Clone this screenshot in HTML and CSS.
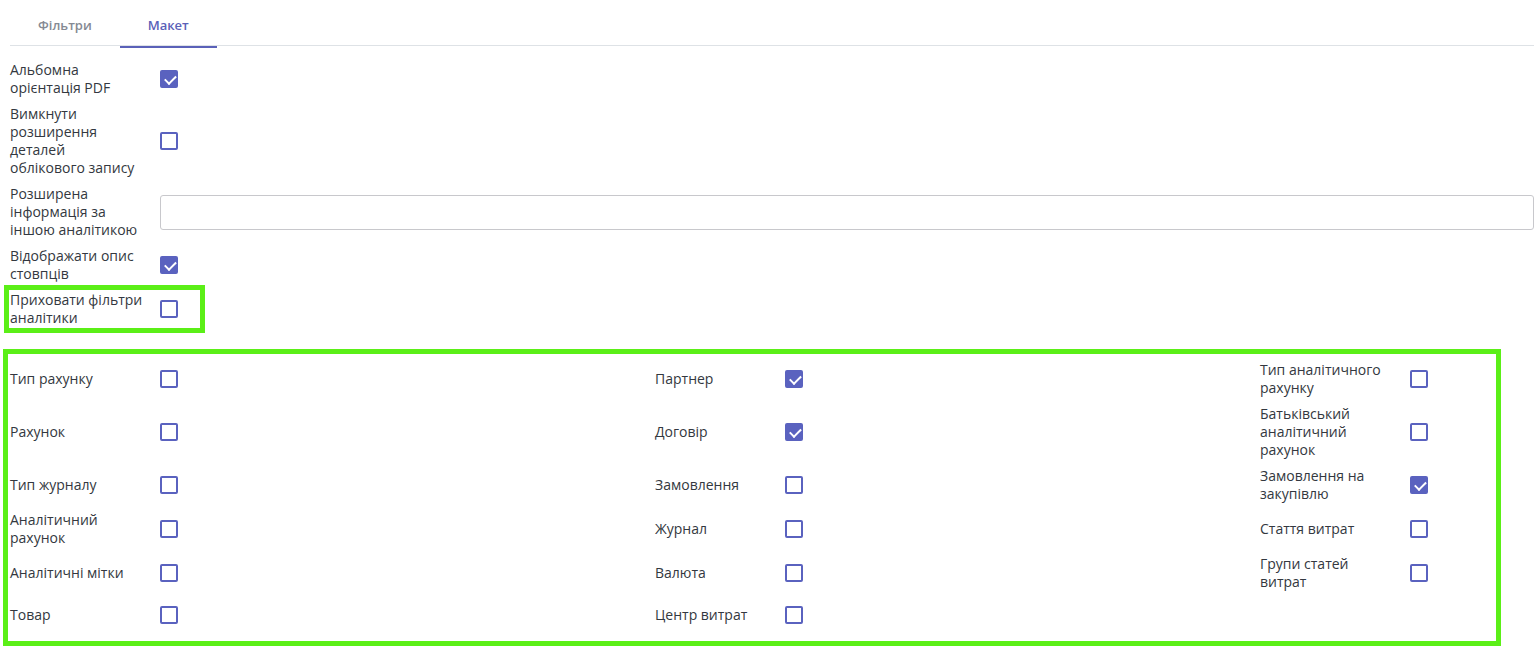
FILE: index.html
```html
<!DOCTYPE html>
<html lang="uk">
<head>
  <meta charset="UTF-8">
  <title>Макет звіту</title>
  <link rel="stylesheet" href="styles.css">
</head>
<body>
  <div class="page">
    <nav class="tabs">
      <a class="tab">Фільтри</a>
      <a class="tab active">Макет</a>
    </nav>

    <div class="form-list">
      <div class="row">
        <label class="lbl">Альбомна орієнтація PDF</label>
        <div class="fld"><input type="checkbox" class="chk" checked></div>
      </div>
      <div class="row">
        <label class="lbl">Вимкнути розширення деталей облікового запису</label>
        <div class="fld"><input type="checkbox" class="chk"></div>
      </div>
      <div class="row">
        <label class="lbl">Розширена інформація за іншою аналітикою</label>
        <div class="fld"><input type="text" class="txt"></div>
      </div>
      <div class="row">
        <label class="lbl">Відображати опис стовпців</label>
        <div class="fld"><input type="checkbox" class="chk" checked></div>
      </div>
      <div class="row marked">
        <label class="lbl">Приховати фільтри аналітики</label>
        <div class="fld"><input type="checkbox" class="chk"></div>
      </div>
    </div>

    <div class="analytic-box">
      <label class="lbl">Тип рахунку</label>
      <div class="fld"><input type="checkbox" class="chk"></div>
      <label class="lbl">Партнер</label>
      <div class="fld"><input type="checkbox" class="chk" checked></div>
      <label class="lbl">Тип аналітичного рахунку</label>
      <div class="fld"><input type="checkbox" class="chk"></div>

      <label class="lbl">Рахунок</label>
      <div class="fld"><input type="checkbox" class="chk"></div>
      <label class="lbl">Договір</label>
      <div class="fld"><input type="checkbox" class="chk" checked></div>
      <label class="lbl">Батьківський аналітичний рахунок</label>
      <div class="fld"><input type="checkbox" class="chk"></div>

      <label class="lbl">Тип журналу</label>
      <div class="fld"><input type="checkbox" class="chk"></div>
      <label class="lbl">Замовлення</label>
      <div class="fld"><input type="checkbox" class="chk"></div>
      <label class="lbl">Замовлення на закупівлю</label>
      <div class="fld"><input type="checkbox" class="chk" checked></div>

      <label class="lbl">Аналітичний рахунок</label>
      <div class="fld"><input type="checkbox" class="chk"></div>
      <label class="lbl">Журнал</label>
      <div class="fld"><input type="checkbox" class="chk"></div>
      <label class="lbl">Стаття витрат</label>
      <div class="fld"><input type="checkbox" class="chk"></div>

      <label class="lbl">Аналітичні мітки</label>
      <div class="fld"><input type="checkbox" class="chk"></div>
      <label class="lbl">Валюта</label>
      <div class="fld"><input type="checkbox" class="chk"></div>
      <label class="lbl">Групи статей витрат</label>
      <div class="fld"><input type="checkbox" class="chk"></div>

      <label class="lbl">Товар</label>
      <div class="fld"><input type="checkbox" class="chk"></div>
      <label class="lbl">Центр витрат</label>
      <div class="fld"><input type="checkbox" class="chk"></div>
    </div>
  </div>
</body>
</html>
```

FILE: styles.css
```css
body {
  margin: 0;
  background-color: #fff;
  color: #333840;
  font-family: "Open Sans", "Noto Sans", sans-serif;
  font-size: 14px;
  line-height: 18px;
  overflow-x: hidden;
}

.page {
  padding-left: 10px;
}

.tabs {
  display: flex;
  border-bottom: 1px solid #dee2e6;
}

.tab {
  position: relative;
  padding: 16px 28px 11px;
  color: #858a93;
  font-size: 13px;
  font-weight: 600;
  cursor: pointer;
}

.tab.active {
  color: #5a61b8;
  font-weight: 600;
}

.tab.active::after {
  content: "";
  position: absolute;
  left: 0;
  right: 0;
  bottom: -3px;
  height: 2px;
  background-color: #5a61b8;
}

.form-list {
  display: flex;
  flex-direction: column;
  gap: 8px;
  margin-top: 15px;
}

.row {
  display: grid;
  grid-template-columns: 150px 1fr;
  align-items: center;
}

.row.marked {
  width: fit-content;
  padding-right: 21px;
  outline: 5px solid #5bef17;
  outline-offset: 1px;
}

.lbl {
  padding-right: 17.5px;
}

.fld {
  display: flex;
  align-items: center;
}

.txt {
  width: calc(100% + 40px);
  height: 35px;
  box-sizing: border-box;
  border: 1px solid #c8c8cc;
  border-radius: 3px;
  padding: 0 8px;
  font: inherit;
}

.chk {
  appearance: none;
  position: relative;
  margin: 0;
  width: 18px;
  height: 18px;
  box-sizing: border-box;
  border: 2px solid #5a62bf;
  border-radius: 2px;
  background-color: #fff;
}

.chk:checked {
  background-color: #5a62bf;
}

.chk:checked::after {
  content: "";
  position: absolute;
  left: 4.5px;
  top: 0.5px;
  width: 4.5px;
  height: 9px;
  border-right: 2px solid #fff;
  border-bottom: 2px solid #fff;
  transform: rotate(45deg);
}

.analytic-box {
  display: grid;
  grid-template-columns: 150px 495px 130px 475px 150px 1fr;
  grid-auto-rows: minmax(31px, auto);
  row-gap: 8px;
  align-items: center;
  margin: 22px 33px 0 -7px;
  padding: 7px 0 11px 2px;
  border: 5px solid #5bef17;
}
```
